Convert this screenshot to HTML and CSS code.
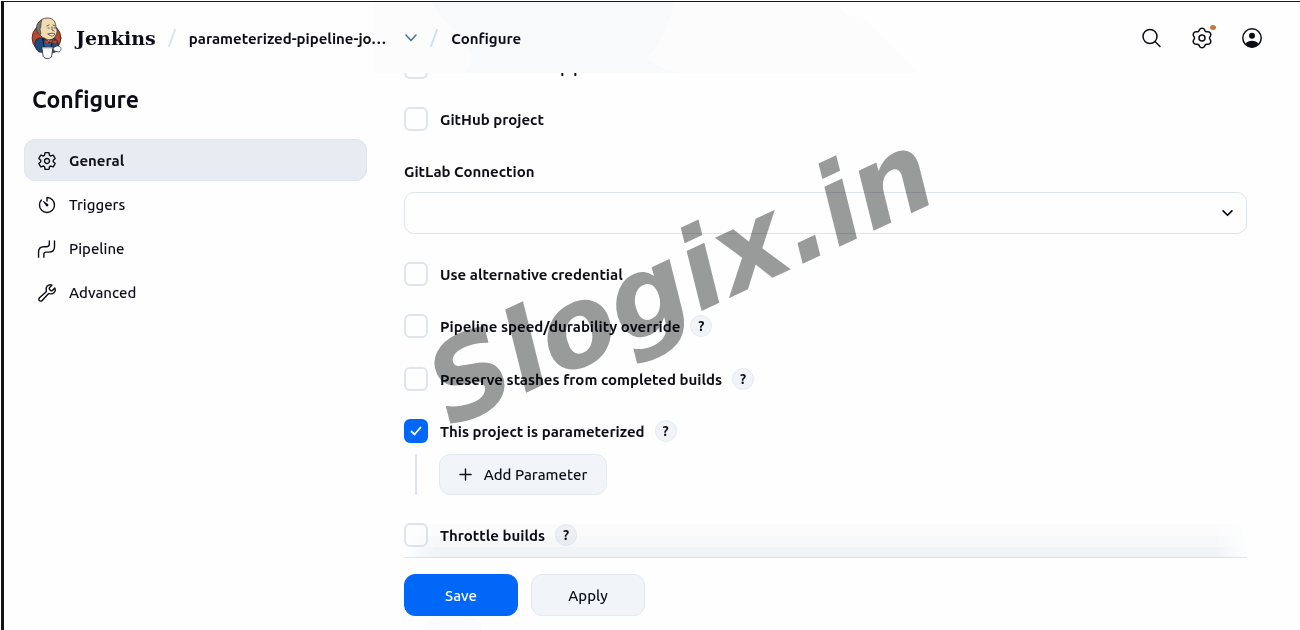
FILE: index.html
```html
<!DOCTYPE html>
<html lang="en">
<head>
<meta charset="utf-8">
<meta name="viewport" content="width=device-width, initial-scale=1">
<title>Configure - Jenkins</title>
<link rel="stylesheet" href="styles.css">
</head>
<body>
<div class="app">
  <header class="header">
    <svg class="header-tint" viewBox="0 0 544 71" preserveAspectRatio="none" aria-hidden="true">
      <path d="M0 0H464C470 14 478 16 490 16L544 71H0Z" fill="#fcfcfd"/>
      <path d="M58 0H300C298 18 292 22 284 42L273 56C278 64 290 66 306 71H92L99 56 84 30 66 14Z" fill="#f7f9fb"/>
    </svg>
    <a class="brand" href="#">
      <svg class="logo" viewBox="0 0 31 42" aria-hidden="true">
        <ellipse cx="15.500" cy="21" rx="14.400" ry="14.500" fill="#b8492f" stroke="#5b2b25"/>
        <path d="M5 23C8 20 12 21 14 22L22 21C27 22 28 27 27 34L21 36 8 35C3 31 3 26 5 23Z" fill="#1f4b7c" stroke="#172a43" stroke-width=".8"/>
        <path d="M12 22L18 26 21 21 20 32H14Z" fill="#2c5f93"/>
        <path d="M13 21L18 25 21 20Z" fill="#eef0ee"/>
        <path d="M7 8C8 3 12 1 17 1C23 1 25 6 25 11C27 13 26 16 25 18C23 23 18 24 13 21C8 19 7 15 7 8Z" fill="#f0dcb0" stroke="#3a3330" stroke-width=".8"/>
        <path d="M7 16C4 12 5 5 11 3C9 7 11 9 9 12L10 17C8 18 7 17 7 16Z" fill="#777470" stroke="#3a3330" stroke-width=".6"/>
        <path d="M16 9L18 8M22 8L24 9M21 10V13L23 14M17 11H18M23 11H24M17 17C20 16 23 16 24 17C22 20 19 19 17 17" fill="#fff3df" stroke="#44352f" stroke-width=".8"/>
        <path d="M14 23L18 24 21 22 22 26 18 25 15 27ZM22 24L26 23 25 27 22 26" fill="#d6452e" stroke="#712b24" stroke-width=".6"/>
        <path d="M26 29C31 28 31 34 28 35L23 34 22 31Z" fill="#fff" stroke="#3c3f48" stroke-width=".8"/>
        <path d="M11 30H22L20.500 40C18 42 14 42 12.500 40Z" fill="#fff" stroke="#333944" stroke-width=".9"/>
        <path d="M12 31H21" stroke="#8c8f94" stroke-width=".7"/>
      </svg>
      <span class="brand-name">Jenkins</span>
    </a>
    <svg class="slash" viewBox="0 0 8 18" aria-hidden="true"><path d="M7 1L1 17"/></svg>
    <a class="crumb" href="#">parameterized-pipeline-jo…</a>
    <button class="crumb-toggle" type="button" aria-label="Job menu">
      <svg viewBox="0 0 14 8" aria-hidden="true"><path d="M2 1L7 6.500L12 1"/></svg>
    </button>
    <svg class="slash slash-blue" viewBox="0 0 8 18" aria-hidden="true"><path d="M7 1L1 17"/></svg>
    <a class="crumb" href="#">Configure</a>
    <nav class="actions" aria-label="Account">
      <button class="action" type="button" aria-label="Search">
        <svg viewBox="0 0 22 22" aria-hidden="true"><circle cx="9" cy="9.500" r="7"/><path d="M14 14.500L19 19.500"/></svg>
      </button>
      <button class="action" type="button" aria-label="Manage Jenkins">
        <svg viewBox="1 1 22 22" aria-hidden="true"><path d="M9.370 3.920A2.900 2.900 0 0 1 14.630 3.920A2.300 2.300 0 0 0 17.690 5.680A2.900 2.900 0 0 1 20.310 10.230A2.300 2.300 0 0 0 20.310 13.770A2.900 2.900 0 0 1 17.690 18.320A2.300 2.300 0 0 0 14.630 20.080A2.900 2.900 0 0 1 9.370 20.080A2.300 2.300 0 0 0 6.310 18.320A2.900 2.900 0 0 1 3.690 13.770A2.300 2.300 0 0 0 3.690 10.230A2.900 2.900 0 0 1 6.310 5.680A2.300 2.300 0 0 0 9.370 3.920Z"/><circle cx="12" cy="12" r="3"/></svg>
        <span class="notice"></span>
      </button>
      <button class="action" type="button" aria-label="User">
        <svg viewBox="0 0 22 22" aria-hidden="true"><circle cx="11" cy="11" r="9.200" stroke-width="1.500"/><circle cx="11" cy="8.800" r="3" fill="currentColor" stroke="none"/><path d="M4.500 17C6 14.400 8.500 13.800 11 13.800S16 14.400 17.500 17C15.500 19.700 13.500 20.400 11 20.400S6.500 19.700 4.500 17Z" fill="currentColor" stroke="none"/></svg>
      </button>
    </nav>
  </header>

  <div class="body">
    <aside class="sidebar">
      <h1 class="title">Configure</h1>
      <nav class="menu" aria-label="Sections">
        <a class="item item-active" href="#general">
          <svg viewBox="0 0 512 512" aria-hidden="true"><path d="M262.290 192.310a64 64 0 1057.400 57.400 64.130 64.130 0 00-57.400-57.400zM416.390 256a154.340 154.340 0 01-1.530 20.790l45.210 35.460a10.810 10.810 0 012.450 13.750l-42.770 74a10.810 10.810 0 01-13.140 4.590l-44.900-18.080a16.110 16.110 0 00-15.170 1.750A164.480 164.480 0 01325 400.800a15.940 15.940 0 00-8.820 12.140l-6.730 47.890a11.080 11.080 0 01-10.680 9.170h-85.540a11.110 11.110 0 01-10.690-8.870l-6.720-47.820a16.070 16.070 0 00-9-12.220 155.300 155.300 0 01-21.460-12.570 16 16 0 00-15.110-1.710l-44.890 18.070a10.810 10.810 0 01-13.140-4.580l-42.770-74a10.800 10.800 0 012.450-13.750l38.210-30a16.050 16.050 0 006-14.080c-.36-4.170-.58-8.330-.58-12.500s.21-8.270.58-12.350a16 16 0 00-6.070-13.940l-38.190-30A10.810 10.810 0 0149.480 186l42.770-74a10.810 10.810 0 0113.140-4.590l44.900 18.080a16.110 16.110 0 0015.170-1.750A164.480 164.480 0 01187 111.200a15.940 15.940 0 008.820-12.140l6.730-47.890A11.080 11.080 0 01213.230 42h85.540a11.110 11.110 0 0110.690 8.870l6.720 47.820a16.070 16.070 0 009 12.220 155.300 155.300 0 0121.460 12.570 16 16 0 0015.110 1.710l44.890-18.070a10.810 10.810 0 0113.140 4.580l42.770 74a10.800 10.800 0 01-2.450 13.750l-38.210 30a16.050 16.050 0 00-6.050 14.080c.33 4.140.55 8.300.55 12.470z"/></svg>
          General
        </a>
        <a class="item" href="#triggers">
          <svg viewBox="0 0 512 512" aria-hidden="true"><path d="M112.910 128A191.850 191.850 0 0064 254c-1.180 106.350 85.650 193.800 192 194 106.200.2 192-85.830 192-192 0-104.540-83.550-189.610-187.500-192a4.360 4.360 0 00-4.500 4.370V152"/><path d="M233.380 278.630l-79-113a8.130 8.130 0 0111.320-11.320l113 79a32.500 32.500 0 01-37.250 53.260 33.210 33.210 0 01-8.070-7.940z" fill="currentColor" stroke="none"/></svg>
          Triggers
        </a>
        <a class="item" href="#pipeline">
          <svg viewBox="0 0 512 512" aria-hidden="true"><path d="M40 464V336Q40 200 170 200H240Q316 200 316 130V48M176 464V388Q176 336 228 336H312Q448 336 448 200V48"/></svg>
          Pipeline
        </a>
        <a class="item" href="#advanced">
          <svg viewBox="0 0 512 512" aria-hidden="true"><path d="M393.870 190a32.100 32.100 0 01-45.250 0l-26.570-26.570a32.090 32.090 0 010-45.260L382.190 58a1 1 0 00-.3-1.640c-38.820-16.640-89.150-8.160-121.110 23.570-30.580 30.350-32.320 76-21.120 115.840a31.930 31.930 0 01-9.060 32.080L64 380a48.170 48.170 0 1068 68l153.860-167a31.930 31.930 0 0131.600-9.130c39.540 10.590 84.540 8.600 114.720-21.190 32.490-32 39.500-88.560 23.750-120.930a1 1 0 00-1.600-.26z"/></svg>
          Advanced
        </a>
      </nav>
    </aside>

    <form class="form">
      <div class="fields">
        <div class="row"><input class="check" type="checkbox" id="resume"><label for="resume">Do not allow the pipeline to resume if the controller restarts</label></div>
        <div class="row"><input class="check" type="checkbox" id="github"><label for="github">GitHub project</label></div>
        <div class="connection">
          <label for="gitlab">GitLab Connection</label>
          <div class="select-wrap">
            <select class="select" id="gitlab"><option></option></select>
            <svg class="select-arrow" viewBox="0 0 12 8" aria-hidden="true"><path d="M1 1L6 6L11 1"/></svg>
          </div>
        </div>
        <div class="row"><input class="check" type="checkbox" id="alternative"><label for="alternative">Use alternative credential</label></div>
        <div class="row"><input class="check" type="checkbox" id="speed"><label for="speed">Pipeline speed/durability override</label><button class="help" type="button">?</button></div>
        <div class="row"><input class="check" type="checkbox" id="stashes"><label for="stashes">Preserve stashes from completed builds</label><button class="help" type="button">?</button></div>
        <div class="row"><input class="check" type="checkbox" id="params" checked><label for="params">This project is parameterized</label><button class="help" type="button">?</button></div>
        <div class="nested">
          <button class="button add" type="button"><svg viewBox="0 0 14 14" aria-hidden="true"><path d="M7 1V13M1 7H13"/></svg>Add Parameter</button>
        </div>
        <div class="row"><input class="check" type="checkbox" id="throttle"><label for="throttle">Throttle builds</label><button class="help" type="button">?</button></div>
      </div>
      <div class="footer">
        <button class="button primary" type="submit">Save</button>
        <button class="button" type="button">Apply</button>
      </div>
    </form>
  </div>
  <div class="watermark" aria-hidden="true">Slogix.in</div>
</div>
</body>
</html>
```
FILE: styles.css
```css
* { box-sizing: border-box; }

body {
  margin: 0;
  padding: 1px 0 0 1px;
  background: #fefefe;
  color: #0d0d18;
  font: 500 15px/24px Ubuntu, "Noto Sans", sans-serif;
}

button, select, input { font: inherit; color: inherit; margin: 0; }
a { color: inherit; text-decoration: none; }
svg { display: block; flex: none; fill: none; stroke: currentColor; stroke-linecap: round; stroke-linejoin: round; }

.app {
  position: relative;
  display: flex;
  flex-direction: column;
  height: calc(100vh - 1px);
  overflow: hidden;
  border-top: 1px solid #161a1a;
  border-left: 3px solid #101414;
}

.header {
  position: relative;
  z-index: 1;
  flex: none;
  display: flex;
  align-items: center;
  height: 71px;
  padding: 0 36px 0 27px;
  background: #fefefe;
  font-weight: 600;
}
.header > * { position: relative; }
.header > .header-tint { position: absolute; top: 0; left: 370px; width: 544px; height: 71px; stroke: none; }
.brand { display: flex; align-items: center; gap: 14px; }
.logo { width: 31px; height: 42px; }
.brand-name { font: bold 19px/24px "DejaVu Serif", serif; }
.slash { width: 8px; height: 18px; margin: 0 13px 0 12px; stroke: #dde3ec; stroke-width: 2; }
.crumb { padding-top: 2px; }
.crumb-toggle { padding: 4px; margin: 0 0 0 14px; border: 0; background: none; color: #47709b; }
.crumb-toggle svg { width: 14px; height: 8px; stroke-width: 1.500; }
.slash-blue { margin-left: 8px; stroke: #cfe0ef; }
.actions { display: flex; gap: 26px; margin-left: auto; }
.action { position: relative; padding: 1px; border: 0; background: none; }
.action svg { width: 22px; height: 22px; stroke-width: 1.500; }
.notice { position: absolute; top: -1px; right: -2px; width: 6px; height: 5px; border-radius: 50%; background: #c67b3c; }

.body { display: grid; grid-template-columns: 343px minmax(0, 1fr); gap: 37px; flex: 1; min-height: 0; padding: 0 53px 0 20px; }

.title { margin: 11px 8px 23px; font-size: 23px; line-height: 32px; font-weight: 700; }
.menu { display: grid; gap: 2px; }
.item { display: flex; align-items: center; gap: 12px; height: 42px; padding: 1px 13px 0; border-radius: 12px; }
.item svg { width: 20px; height: 20px; stroke-width: 36; }
.item-active { background: #e7ecf3; box-shadow: inset 0 0 0 1px #dfe5ee; font-weight: 600; }

.form { display: flex; flex-direction: column; min-height: 0; }
.fields { display: flex; flex-direction: column; flex: 1; min-height: 0; gap: 28px; margin-top: -18px; font-weight: 600; }
.row { display: flex; align-items: center; flex: none; height: 24px; }
.row label { margin-left: 12px; padding-top: 2px; }
.check { appearance: none; flex: none; width: 24px; height: 24px; border: 2px solid #dfe5ed; border-radius: 6px; background: #fefefe; }
.check:checked {
  border-color: #0067f8;
  background: #0067f8 url("data:image/svg+xml,%3Csvg xmlns='http://www.w3.org/2000/svg' viewBox='0 0 12 12'%3E%3Cpath d='M1.500 6.500L4.500 9.500L10.500 2.500' fill='none' stroke='white' stroke-width='1.800' stroke-linecap='round'/%3E%3C/svg%3E") center / 12px 12px no-repeat;
}
.help { flex: none; width: 22px; height: 22px; margin-left: 10px; padding: 0; border: 1px solid #e6ebf1; border-radius: 50%; background: #f0f3f7; font-size: 14px; line-height: 20px; font-weight: 700; }

.connection { display: grid; gap: 8px; padding-top: 1px; }
.select-wrap { display: grid; align-items: center; }
.select-wrap > * { grid-area: 1 / 1; }
.select { appearance: none; width: 100%; height: 42px; padding: 0 36px 0 12px; border: 1px solid #dde4ed; border-radius: 10px; background: #fefefe; }
.select-arrow { justify-self: end; width: 11px; height: 7px; margin-right: 14px; stroke-width: 2; pointer-events: none; }

.nested { flex: none; margin: -17px 0 0 11px; padding-left: 22px; border-left: 2px solid #dfe3ec; }
.button { display: flex; align-items: center; justify-content: center; min-width: 114px; height: 42px; padding: 1px 20px 0; border: 1px solid #e5eaf1; border-radius: 11px; background: #f1f4f8; font-weight: 500; }
.add { height: 41px; min-width: 168px; padding: 0 16px; gap: 12px; }
.add svg { width: 13px; height: 13px; stroke-width: 1.500; }
.primary { border-color: #0067f8; background: #0067f8; color: #fff; }

.footer { position: relative; display: flex; gap: 13px; flex: none; padding: 16px 0 14px; border-top: 1px solid #e2e6ee; background: #fefefe; }
.footer::before {
  content: "";
  position: absolute;
  right: 0;
  bottom: 100%;
  left: 0;
  height: 34px;
  background: linear-gradient(#fcfcfd 0 34%, #f7f9fa 34% 68%, #f1f5f8 68%);
  mask-image: linear-gradient(90deg, transparent, #000 32px calc(100% - 32px), transparent);
  mix-blend-mode: multiply;
  pointer-events: none;
}
.footer::after {
  content: "";
  position: absolute;
  left: 20px;
  bottom: 0;
  width: 58px;
  height: 13px;
  border-radius: 29px 29px 0 0;
  background: #f9fbfc;
}

.row:nth-child(5) { margin-bottom: 1px; }

.watermark {
  position: absolute;
  z-index: 2;
  top: 213px;
  left: 405px;
  color: #9a9c9b;
  font: italic bold 111px/128px "DejaVu Sans", sans-serif;
  white-space: nowrap;
  transform: rotate(-25deg);
  mix-blend-mode: multiply;
  pointer-events: none;
}
```
